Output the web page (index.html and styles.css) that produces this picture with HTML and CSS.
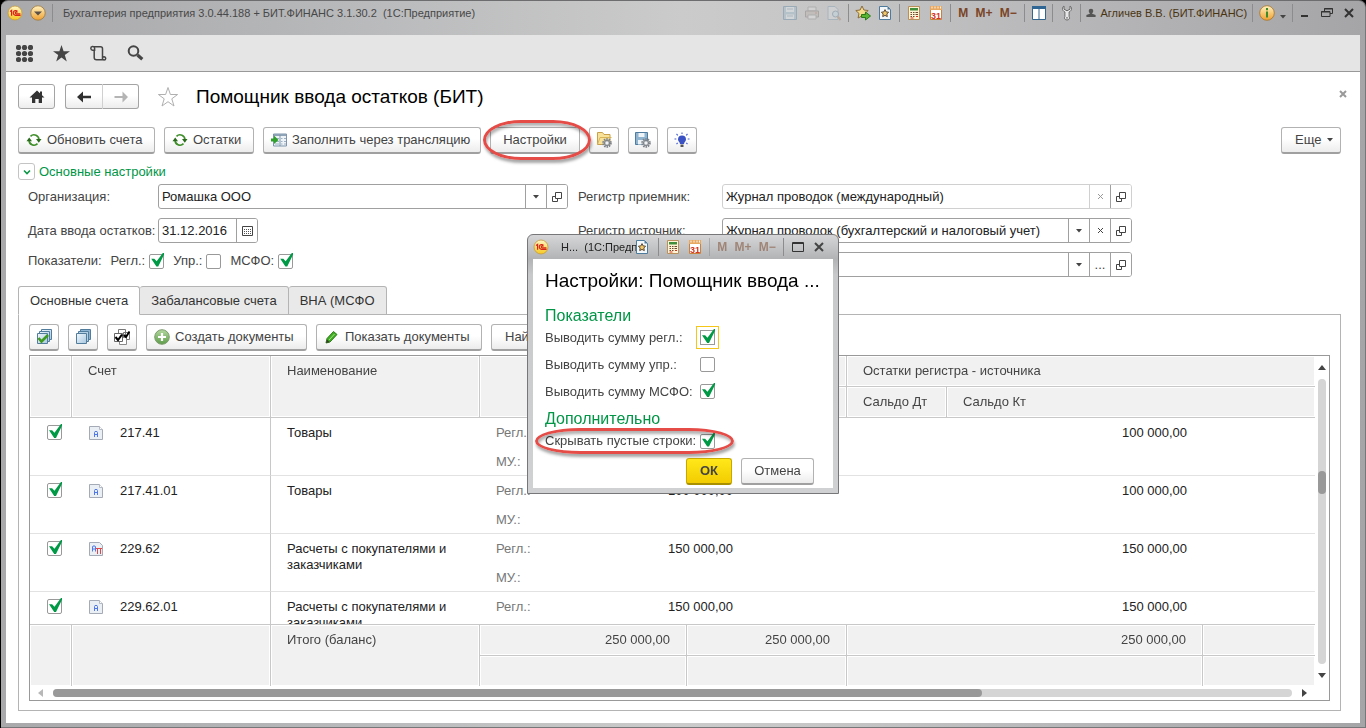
FILE: index.html
```html
<!DOCTYPE html>
<html lang="ru">
<head>
<meta charset="utf-8">
<title>Помощник ввода остатков (БИТ)</title>
<link rel="stylesheet" href="styles.css">
</head>
<body>
<svg class="sprite" aria-hidden="true">
  <defs>
    <linearGradient id="gGold" x1="0" y1="0" x2="0" y2="1"><stop offset="0" stop-color="#fff2c0"/><stop offset="1" stop-color="#f0a030"/></linearGradient>
    <linearGradient id="gYellow" x1="0" y1="0" x2="0" y2="1"><stop offset="0" stop-color="#fff6c8"/><stop offset="1" stop-color="#f6c81e"/></linearGradient>
    <linearGradient id="gGreen" x1="0" y1="0" x2="0" y2="1"><stop offset="0" stop-color="#b4d8a0"/><stop offset="1" stop-color="#5c9c48"/></linearGradient>
    <linearGradient id="gBlue" x1="0" y1="0" x2="1" y2="1"><stop offset="0" stop-color="#f2f8fc"/><stop offset="1" stop-color="#a8c8e0"/></linearGradient>
  </defs>
  <symbol id="logo" viewBox="0 0 16 16"><circle cx="8" cy="8" r="7" fill="url(#gYellow)" stroke="#c79a3a" stroke-width=".8"/><path d="M3 6.600l1.600-1.200v5.400M10.500 6.400A2.400 2.400 0 1 0 9 10.300h4.600M10.200 7.600a1 1 0 1 0-.8 1.200h4" fill="none" stroke="#d8231c" stroke-width="1.200"/></symbol>
  <symbol id="drop" viewBox="0 0 16 16"><circle cx="8" cy="8" r="7.200" fill="url(#gGold)" stroke="#a07838" stroke-width=".8"/><path d="M4 6.400h8L8 10.600z" fill="#5a5048"/></symbol>
  <symbol id="floppy" viewBox="0 0 16 16"><path d="M1.500 1.500h13v13h-13z" fill="#a5bccb" stroke="#6f8fa6"/><path d="M4 2h8v5H4zM4 9.500h8V14H4z" fill="#dfe6ea"/><path d="M5 4h6M5 11h6" stroke="#93a9b8"/></symbol>
  <symbol id="printer" viewBox="0 0 16 16"><path d="M4 2h8v4H4z" fill="#dcdcdc" stroke="#999"/><path d="M1.500 6h13v6h-13z" fill="#bdb5b0" stroke="#8b8581"/><path d="M4 10h8v4H4z" fill="#e2e2e2" stroke="#999"/><path d="M11 8h2" stroke="#c07860"/></symbol>
  <symbol id="preview" viewBox="0 0 16 16"><path d="M2 1.500h7l3 3v10H2z" fill="#d6dadd" stroke="#8da4b4"/><circle cx="9.500" cy="9" r="3" fill="#c4d8e4" stroke="#7a92a4"/><path d="M11.600 11.500L14.500 15" stroke="#b09078" stroke-width="2"/></symbol>
  <symbol id="favadd" viewBox="0 0 16 16"><path d="M7 1l1.900 4 4.300.5-3.200 3 .9 4.400L7 10.800 3.100 13 4 8.500.8 5.500 5.100 5z" fill="#f5dc8c" stroke="#8a6a3a"/><path d="M6.500 9.500h4V7l5 4-5 4v-2.500h-4z" fill="#58b432" stroke="#2a7a18"/></symbol>
  <symbol id="favs" viewBox="0 0 16 16"><path d="M2.500 1.500h8l3 3v10h-11z" fill="#f4f8fb" stroke="#4e7a9c"/><path d="M10.500 1.500v3h3z" fill="#4e7a9c"/><path d="M8 4.600l1.100 2.300 2.500.3-1.800 1.800.5 2.600L8 10.400l-2.300 1.200.5-2.600-1.800-1.800 2.500-.3z" fill="#f0c868" stroke="#5c4630"/></symbol>
  <symbol id="calc" viewBox="0 0 16 16"><path d="M2.500 1.500h11v13h-11z" fill="#fff3d4" stroke="#b98f5c"/><path d="M4 3h8v2.500H4z" fill="#3f8f3c"/><path d="M4.500 7.500h1.500m1 0h1.500m1 0H12M4.500 9.500h1.500m1 0h1.500m1 0H12M4.500 11.500h1.500m1 0h1.500" stroke="#6a4a30"/><path d="M10 11.500h2M4.500 13h3" stroke="#d83020"/></symbol>
  <symbol id="cal" viewBox="0 0 16 16"><path d="M2.500 3h11v11.500h-11z" fill="#fff" stroke="#c8823c"/><path d="M2 1h12v4H2z" fill="#e8a860"/><path d="M4 1.500v2m3-2v2m3-2v2m2.500-2v2" stroke="#fff" stroke-width=".9"/><text x="8" y="13.500" text-anchor="middle" class="cal-day">31</text></symbol>
  <symbol id="panes" viewBox="0 0 16 16"><path d="M1.500 1.500h13v13h-13z" fill="#fff" stroke="#33668f"/><path d="M1 1h14v3H1z" fill="#2f6693"/><path d="M8 4v10" stroke="#33668f"/></symbol>
  <symbol id="wrench" viewBox="0 0 16 16"><path d="M5 1v3.200l3 1.600 3-1.600V1c2 1.200 2.400 4.300-.9 6v4.500c1 1.500.2 3.500-2.100 3.500s-3.100-2-2.100-3.500V7C2.600 5.300 3 2.200 5 1z" fill="#e8e8e8" stroke="#686868"/><circle cx="8" cy="12.800" r=".9" fill="#777"/></symbol>
  <symbol id="user" viewBox="0 0 10 10"><circle cx="5" cy="3" r="2.300" fill="#555"/><path d="M3.800 4h2.400v1.800L9.600 7v2H.4V7l3.400-1.200z" fill="#555"/></symbol>
  <symbol id="info" viewBox="0 0 16 16"><circle cx="8" cy="8" r="7.300" fill="url(#gGold)" stroke="#a87428" stroke-width=".8"/><path d="M8 3v2.200M8 6.400v6" stroke="#3c8a2a" stroke-width="2"/></symbol>
  <symbol id="apps" viewBox="0 0 17 17"><g fill="#454545"><circle cx="2.500" cy="2.500" r="2.600"/><circle cx="8.500" cy="2.500" r="2.600"/><circle cx="14.500" cy="2.500" r="2.600"/><circle cx="2.500" cy="8.500" r="2.600"/><circle cx="8.500" cy="8.500" r="2.600"/><circle cx="14.500" cy="8.500" r="2.600"/><circle cx="2.500" cy="14.500" r="2.600"/><circle cx="8.500" cy="14.500" r="2.600"/><circle cx="14.500" cy="14.500" r="2.600"/></g></symbol>
  <symbol id="star" viewBox="0 0 17 17"><path d="M8.500 0l2.100 6.200H17l-5.200 3.900 2 6.400-5.300-3.900-5.300 3.900 2-6.400L0 6.200h6.400z" fill="#454545"/></symbol>
  <symbol id="scroll" viewBox="0 0 17 17"><path d="M4.200 5V12.500a2.300 2.300 0 0 0 2.300 2.300h7.500M2.800 5.200A1.900 1.900 0 1 1 4.600 3v2.200zM4 1.700h6.500a2 2 0 0 1 2 2v8.600M12.500 12.200v2.600M14.200 11.800a1.600 1.600 0 1 1-1.700 1.600v-1.300z" fill="none" stroke="#454545" stroke-width="1.500"/></symbol>
  <symbol id="lens" viewBox="0 0 17 17"><circle cx="6.500" cy="6" r="4.800" fill="none" stroke="#454545" stroke-width="2"/><path d="M10.500 10l4.800 4.300" stroke="#454545" stroke-width="3.200"/></symbol>
  <symbol id="home" viewBox="0 0 16 16"><path d="M8 1.500l7.500 7H13V14H9.700v-4H6.300v4H3V8.500H.5z" fill="#333"/><path d="M11 2.500h2v4h-2z" fill="#333"/></symbol>
  <symbol id="left" viewBox="0 0 16 16"><path d="M1 8l6-5.500v4.300h8v2.400H7v4.300z" fill="#2f2f2f"/></symbol>
  <symbol id="right" viewBox="0 0 16 16"><path d="M15 8L9.500 2.500V7H1.500v2h8v4.500z" fill="#b4b4b4"/></symbol>
  <symbol id="outline-star" viewBox="0 0 22 22"><path d="M11 1.500l2.400 7h7.200l-5.800 4.300 2.200 7.200-6-4.300L5 20l2.200-7.200L1.400 8.500h7.200z" fill="#fff" stroke="#b0b0b0"/></symbol>
  <symbol id="refresh" viewBox="0 0 16 16"><path d="M4.500 4.300A4.900 4.900 0 0 1 12.900 8M11.500 11.700A4.900 4.900 0 0 1 3.100 8" fill="none" stroke="#3f8f2a" stroke-width="1.700"/><path d="M.5 9.300L3.200 5.500 6 9.300zM10 6.900h5.500l-2.700 3.800z" fill="#2a6a1c"/></symbol>
  <symbol id="fill" viewBox="0 0 16 16"><path d="M2.500 2h13v12h-13z" fill="#eef3f8" stroke="#7d94ab"/><path d="M3 3h12" stroke="#8ea3b8" stroke-width="2"/><path d="M9 3v11" stroke="#7d94ab"/><path d="M4 6.500h4m2 0h1.500m1.500 0h2M4 9.500h4m2 0h1.500m1.500 0h2M4 12h4m2 0h1.500m1.500 0h2" stroke="#9db0c4"/><path d="M0 6.500h3V3.500L7.500 8 3 12V9.500H0z" fill="#2fa02a"/></symbol>
  <symbol id="gear" viewBox="0 0 10 10"><circle cx="5" cy="5" r="3.700" fill="none" stroke="#7c8288" stroke-width="2.200" stroke-dasharray="1.500 .82"/><circle cx="5" cy="5" r="2.600" fill="#c8ccd0" stroke="#7c8288"/><circle cx="5" cy="5" r="1" fill="#fff"/></symbol>
  <symbol id="folder-gear" viewBox="0 0 16 16"><path d="M1.500 12.500V.500h5l1.500 2h6v10z" fill="#f8e29a" stroke="#c8a04c"/><path d="M1.500 12.500L4 5.500h11.500" fill="none" stroke="#d8b458"/><use href="#gear" x="6" y="6" width="10" height="10"/></symbol>
  <symbol id="save-gear" viewBox="0 0 16 16"><path d="M.5.500h12v12H.5z" fill="#8fb4cf" stroke="#4f7c9e"/><path d="M3.500 1h6v4h-6zM3 8h7v4.500H3z" fill="#eef4f8"/><use href="#gear" x="6" y="6" width="10" height="10"/></symbol>
  <symbol id="bulb" viewBox="0 0 16 16"><path d="M8 3.500a4 4 0 0 1 4 4c0 2-2 2.500-2 4.500H6c0-2-2-2.500-2-4.500a4 4 0 0 1 4-4z" fill="#3a52c4"/><path d="M6.500 12.500h3v2.500h-3z" fill="#555"/><path d="M8 .5v1.500M2.500 2l1.300 1.300M13.500 2l-1.300 1.300M.5 7h1.800M15.500 7h-1.800M2.500 12l1.200-1.200M13.500 12l-1.200-1.200" stroke="#4a62cc" stroke-width="1.100"/></symbol>
  <symbol id="check-all" viewBox="0 0 16 16"><path d="M5.500.500h10v10h-10z" fill="url(#gBlue)" stroke="#527c9c"/><path d="M3.500 2.500h10v10h-10z" fill="url(#gBlue)" stroke="#527c9c"/><path d="M1.500 4.500h10v10h-10z" fill="url(#gBlue)" stroke="#527c9c"/><path d="M2.500 9l3 3.500L12 6" fill="none" stroke="#3f9a20" stroke-width="2.600"/></symbol>
  <symbol id="check-none" viewBox="0 0 16 16"><path d="M5.500.500h10v10h-10z" fill="#8db4d2" stroke="#527c9c"/><path d="M3.500 2.500h10v10h-10z" fill="#b4d0e4" stroke="#527c9c"/><path d="M1.500 4.500h10v10h-10z" fill="url(#gBlue)" stroke="#527c9c"/></symbol>
  <symbol id="check-inv" viewBox="0 0 16 16"><path d="M4.500.500h7v7h-7zM9.500 3.500h6v7h-6z" fill="#fff" stroke="#777"/><path d="M5.500 8.500h7v7h-7z" fill="#fff" stroke="#888"/><path d="M.5 4.500h8v8h-8z" fill="#fff" stroke="#666"/><path d="M1.500 8l2.500 3 4-5.500M10 6l2 2L15.500 2.500" fill="none" stroke="#000" stroke-width="2"/></symbol>
  <symbol id="plus" viewBox="0 0 16 16"><circle cx="8" cy="8" r="7.300" fill="url(#gGreen)" stroke="#7c9c6c"/><path d="M8 4v8M4 8h8" stroke="#fff" stroke-width="2.200"/></symbol>
  <symbol id="pencil" viewBox="0 0 16 16"><path d="M2 14l1-4.500L9.500 2.500l3.500 3L6 13z" fill="#3fae22" stroke="#2c7c18"/><path d="M5 11l5.500-6" stroke="#a4e088"/><path d="M2 14l1-3.500L5.500 13z" fill="#3c3c2c"/></symbol>
  <symbol id="caret" viewBox="0 0 6 4"><path d="M0 0h6L3 3.500z" fill="#444"/></symbol>
  <symbol id="open" viewBox="0 0 10 10"><path d="M3.500.500h6v6h-6zM3 4.500H.5v5h5V7" fill="none" stroke="#444"/></symbol>
  <symbol id="cross" viewBox="0 0 7 7"><path d="M1 1l5 5M6 1L1 6" stroke="currentColor" fill="none"/></symbol>
  <symbol id="month" viewBox="0 0 11 10"><path d="M.5.500h10v9H.5z" fill="none" stroke="#444"/><path d="M2 3.500h7M2 5.500h7M2 7.500h7" stroke="#555" stroke-dasharray="1 1"/></symbol>
  <symbol id="acc" viewBox="0 0 14 14"><path d="M.5.500h10l3 3v10H.5z" fill="#eaeff6" stroke="#a4abb6"/><path d="M10.500.500v3h3" fill="#fff" stroke="#b4bbc4"/><path d="M5.500 11V6.500L6 5.500h2l.5 1V11M5.500 8.500h3" fill="none" stroke="#5078e8"/></symbol>
  <symbol id="acc2" viewBox="0 0 14 14"><path d="M.5.500h10l3 3v10H.5z" fill="#eaeff6" stroke="#a4abb6"/><path d="M3.500 9.500V5L4 4h2l.5 1v4.500M3.500 7h3" fill="none" stroke="#5078e8"/><path d="M7 6.500h6M8.500 6.500V12M11.500 6.500V12" fill="none" stroke="#e04848"/></symbol>
</svg>

<div class="window">
  <header class="titlebar">
    <svg class="i16"><use href="#logo"/></svg>
    <button class="tb main-menu" aria-label="Главное меню"><svg class="i16"><use href="#drop"/></svg></button>
    <span class="app-title">Бухгалтерия предприятия 3.0.44.188 + БИТ.ФИНАНС 3.1.30.2&nbsp; (1С:Предприятие)</span>
    <div class="tgroup g-file faded"><button class="tb" aria-label="Сохранить"><svg class="i16"><use href="#floppy"/></svg></button><button class="tb" aria-label="Печать"><svg class="i16"><use href="#printer"/></svg></button><button class="tb" aria-label="Просмотр"><svg class="i16"><use href="#preview"/></svg></button></div>
    <div class="tgroup g-two"><button class="tb" aria-label="В избранное"><svg class="i16"><use href="#favadd"/></svg></button><button class="tb" aria-label="Избранное"><svg class="i16"><use href="#favs"/></svg></button></div>
    <div class="tgroup g-two"><button class="tb" aria-label="Калькулятор"><svg class="i16"><use href="#calc"/></svg></button><button class="tb" aria-label="Календарь"><svg class="i16"><use href="#cal"/></svg></button></div>
    <div class="tgroup g-mem"><button class="tb mem">M</button><button class="tb mem">M+</button><button class="tb mem">M−</button></div>
    <div class="tgroup g-one"><button class="tb" aria-label="Панели"><svg class="i16"><use href="#panes"/></svg></button></div>
    <div class="tgroup g-one"><button class="tb" aria-label="Сервис"><svg class="i16"><use href="#wrench"/></svg></button></div>
    <div class="tgroup g-user"><svg class="i10"><use href="#user"/></svg><span>Агличев В.В. (БИТ.ФИНАНС)</span></div>
    <div class="tgroup g-info"><button class="tb" aria-label="Справка"><svg class="i16"><use href="#info"/></svg></button><svg class="caret low"><use href="#caret"/></svg></div>
    <div class="tgroup g-win"><button class="tb" aria-label="Свернуть"><svg class="i12" viewBox="0 0 12 12"><path d="M3 9h7" stroke="#333" stroke-width="2"/></svg></button><button class="tb" aria-label="Восстановить"><svg class="i12" viewBox="0 0 12 12"><path d="M3.500 4V1.500h8v5H9M.5 4.500h8.500v5H.5z" fill="none" stroke="#333"/><path d="M3 2h9M0 5h9" stroke="#333"/></svg></button><button class="tb" aria-label="Закрыть"><svg class="i12" viewBox="0 0 12 12"><path d="M2 2l8 8M10 2l-8 8" stroke="#333" stroke-width="2"/></svg></button></div>
  </header>

  <nav class="sections">
    <button class="tb" aria-label="Меню функций"><svg class="i17"><use href="#apps"/></svg></button>
    <button class="tb" aria-label="Избранное"><svg class="i17"><use href="#star"/></svg></button>
    <button class="tb" aria-label="История"><svg class="i17"><use href="#scroll"/></svg></button>
    <button class="tb" aria-label="Поиск"><svg class="i17"><use href="#lens"/></svg></button>
  </nav>

  <main class="page">
    <div class="head">
      <button class="btn nav-btn" aria-label="Домой"><svg class="i16"><use href="#home"/></svg></button>
      <div class="nav-pair"><button class="btn nav-btn" aria-label="Назад"><svg class="i16"><use href="#left"/></svg></button><button class="btn nav-btn" aria-label="Вперед"><svg class="i16"><use href="#right"/></svg></button></div>
      <button class="tb" aria-label="Добавить в избранное"><svg class="i22"><use href="#outline-star"/></svg></button>
      <h1>Помощник ввода остатков (БИТ)</h1>
      <button class="tb page-close" aria-label="Закрыть страницу"><svg class="i12" viewBox="0 0 12 12"><path d="M3 3l6 6M9 3l-6 6" stroke="#999" stroke-width="2"/></svg></button>
    </div>

    <div class="bar">
      <button class="btn w-update"><svg class="i16"><use href="#refresh"/></svg>Обновить счета</button>
      <button class="btn w-short"><svg class="i16"><use href="#refresh"/></svg>Остатки</button>
      <button class="btn w-fill"><svg class="i16"><use href="#fill"/></svg>Заполнить через трансляцию</button>
      <div class="marked"><button class="btn w-short center">Настройки</button><span class="ring ring-button"></span></div>
      <button class="btn square" aria-label="Загрузить настройки"><svg class="i16"><use href="#folder-gear"/></svg></button>
      <button class="btn square" aria-label="Сохранить настройки"><svg class="i16"><use href="#save-gear"/></svg></button>
      <button class="btn square" aria-label="Подсказка"><svg class="i16"><use href="#bulb"/></svg></button>
      <button class="btn more">Еще<svg class="caret"><use href="#caret"/></svg></button>
    </div>

    <div class="group-head"><button class="fold" aria-label="Свернуть группу"><svg class="i8" viewBox="0 0 8 8"><path d="M1 2.500l3 3 3-3" fill="none" stroke="#0a9646" stroke-width="1.600"/></svg></button><span>Основные настройки</span></div>

    <div class="fields">
      <div class="fcol">
        <div class="frow"><label for="org">Организация:</label><div class="field"><input id="org" type="text" value="Ромашка ООО"><button aria-label="Выбрать"><svg class="caret"><use href="#caret"/></svg></button><button aria-label="Открыть"><svg class="i10"><use href="#open"/></svg></button></div></div>
        <div class="frow"><label for="date">Дата ввода остатков:</label><div class="field date"><input id="date" type="text" value="31.12.2016"><button aria-label="Календарь"><svg class="i11"><use href="#month"/></svg></button></div></div>
        <div class="frow flags"><span>Показатели:</span><label>Регл.:<input class="chk" type="checkbox" checked></label><label>Упр.:<input class="chk" type="checkbox"></label><label>МСФО:<input class="chk" type="checkbox" checked></label></div>
      </div>
      <div class="fcol">
        <div class="frow wide"><label for="dst">Регистр приемник:</label><div class="field dim"><input id="dst" type="text" value="Журнал проводок (международный)"><button class="grey" aria-label="Очистить"><svg class="i7"><use href="#cross"/></svg></button><button class="strong" aria-label="Открыть"><svg class="i10"><use href="#open"/></svg></button></div></div>
        <div class="frow wide"><label for="src">Регистр источник:</label><div class="field"><input id="src" type="text" value="Журнал проводок (бухгалтерский и налоговый учет)"><button aria-label="Выбрать"><svg class="caret"><use href="#caret"/></svg></button><button aria-label="Очистить"><svg class="i7"><use href="#cross"/></svg></button><button aria-label="Открыть"><svg class="i10"><use href="#open"/></svg></button></div></div>
        <div class="frow wide"><span></span><div class="field"><input type="text" aria-label="Правило"><button aria-label="Выбрать"><svg class="caret"><use href="#caret"/></svg></button><button aria-label="Другое">...</button><button aria-label="Открыть"><svg class="i10"><use href="#open"/></svg></button></div></div>
      </div>
    </div>

    <div class="tabs" role="tablist"><button class="tab active" role="tab">Основные счета</button><button class="tab" role="tab">Забалансовые счета</button><button class="tab" role="tab">ВНА (МСФО</button><span class="tab-rest"></span></div>

    <section class="panel">
      <div class="bar">
        <button class="btn square" aria-label="Отметить все"><svg class="i16"><use href="#check-all"/></svg></button>
        <button class="btn square" aria-label="Снять отметки"><svg class="i16"><use href="#check-none"/></svg></button>
        <button class="btn square" aria-label="Инвертировать"><svg class="i16"><use href="#check-inv"/></svg></button>
        <button class="btn w-create"><svg class="i16"><use href="#plus"/></svg>Создать документы</button>
        <button class="btn w-show"><svg class="i16"><use href="#pencil"/></svg>Показать документы</button>
        <button class="btn find">Най...</button>
      </div>

      <div class="grid-box">
        <div class="scroller">
          <table>
            <colgroup><col class="c1"><col class="c2"><col class="c3"><col class="c4"><col class="c5"><col class="c6"><col class="c7"><col></colgroup>
            <thead>
              <tr><th rowspan="2"></th><th rowspan="2">Счет</th><th rowspan="2">Наименование</th><th rowspan="2"></th><th></th><th colspan="3" class="last">Остатки регистра - источника</th></tr>
              <tr><th></th><th>Сальдо Дт</th><th colspan="2" class="last">Сальдо Кт</th></tr>
            </thead>
            <tbody>
              <tr><td class="mark"><input class="chk" type="checkbox" checked aria-label="217.41"></td><td class="edge"><span class="code"><svg class="i14"><use href="#acc"/></svg>217.41</span></td><td class="name">Товары</td><td colspan="2"><div class="sum"><span>Регл.:</span><b></b></div><div class="sum"><span>МУ.:</span></div></td><td colspan="2" class="num">100 000,00</td><td></td></tr>
              <tr><td class="mark"><input class="chk" type="checkbox" checked aria-label="217.41.01"></td><td class="edge"><span class="code"><svg class="i14"><use href="#acc"/></svg>217.41.01</span></td><td class="name">Товары</td><td colspan="2"><div class="sum"><span>Регл.:</span><b>100 000,00</b></div><div class="sum"><span>МУ.:</span></div></td><td colspan="2" class="num">100 000,00</td><td></td></tr>
              <tr><td class="mark"><input class="chk" type="checkbox" checked aria-label="229.62"></td><td class="edge"><span class="code"><svg class="i14"><use href="#acc2"/></svg>229.62</span></td><td class="name">Расчеты с покупателями и заказчиками</td><td colspan="2"><div class="sum"><span>Регл.:</span><b>150 000,00</b></div><div class="sum"><span>МУ.:</span></div></td><td colspan="2" class="num">150 000,00</td><td></td></tr>
              <tr><td class="mark"><input class="chk" type="checkbox" checked aria-label="229.62.01"></td><td class="edge"><span class="code"><svg class="i14"><use href="#acc"/></svg>229.62.01</span></td><td class="name">Расчеты с покупателями и заказчиками</td><td colspan="2"><div class="sum"><span>Регл.:</span><b>150 000,00</b></div><div class="sum"><span>МУ.:</span></div></td><td colspan="2" class="num">150 000,00</td><td></td></tr>
            </tbody>
            <tfoot>
              <tr><td rowspan="2"></td><td rowspan="2"></td><td rowspan="2" class="total">Итого (баланс)</td><td class="num">250 000,00</td><td class="num">250 000,00</td><td colspan="2" class="num">250 000,00</td><td class="last"></td></tr>
              <tr><td></td><td></td><td colspan="2"></td><td class="last"></td></tr>
            </tfoot>
          </table>
        </div>
        <div class="vscroll"><i class="arrow up"></i><div class="track"><div class="thumb"></div></div><i class="arrow down"></i></div>
        <div class="hscroll"><i class="arrow prev"></i><div class="track"><div class="thumb"></div></div><i class="arrow next"></i></div>
      </div>
    </section>
  </main>
</div>

<div class="dialog" role="dialog" aria-labelledby="dlg-title">
  <div class="dlg-bar">
    <svg class="i16"><use href="#logo"/></svg>
    <span class="dlg-caption">Н...&nbsp; (1С:Предп.</span>
    <button class="tb" aria-label="Избранное"><svg class="i16"><use href="#favs"/></svg></button>
    <div class="tgroup g-two"><button class="tb" aria-label="Калькулятор"><svg class="i16"><use href="#calc"/></svg></button><button class="tb" aria-label="Календарь"><svg class="i16"><use href="#cal"/></svg></button></div>
    <div class="tgroup g-mem faded"><button class="tb mem">M</button><button class="tb mem">M+</button><button class="tb mem">M−</button></div>
    <div class="tgroup g-dlg"><button class="tb" aria-label="Развернуть"><svg class="i12" viewBox="0 0 12 12"><path d="M.5 1.500h11v9H.5zM0 2.500h12" fill="none" stroke="#333"/></svg></button><button class="tb" aria-label="Закрыть"><svg class="i12" viewBox="0 0 12 12"><path d="M2 2l8 8M10 2l-8 8" stroke="#444" stroke-width="2"/></svg></button></div>
  </div>
  <div class="dlg-body">
    <h2 id="dlg-title">Настройки: Помощник ввода ...</h2>
    <h3>Показатели</h3>
    <label class="opt"><span>Выводить сумму регл.:</span><input class="chk focus" type="checkbox" checked></label>
    <label class="opt"><span>Выводить сумму упр.:</span><input class="chk" type="checkbox"></label>
    <label class="opt"><span>Выводить сумму МСФО:</span><input class="chk" type="checkbox" checked></label>
    <h3>Дополнительно</h3>
    <label class="opt tight"><span>Скрывать пустые строки:</span><input class="chk" type="checkbox" checked><i class="ring ring-option"></i></label>
    <div class="dlg-actions"><button class="btn ok">ОК</button><button class="btn center cancel">Отмена</button></div>
  </div>
</div>
</body>
</html>
```
FILE: styles.css
```css
* { box-sizing: border-box; }
body { margin: 0; font: 13px/16px "Liberation Sans", Arial, sans-serif; color: #333; background: #000; overflow: hidden; }
button, input { font: inherit; color: inherit; margin: 0; }
button { padding: 0; }
h1, h2, h3 { margin: 0; font-weight: normal; }
svg { display: block; flex: none; }
.sprite { position: absolute; width: 0; height: 0; }
.i7 { width: 7px; height: 7px; }
.i8 { width: 8px; height: 8px; }
.i10 { width: 10px; height: 10px; }
.i11 { width: 11px; height: 10px; }
.i12 { width: 12px; height: 12px; }
.i14 { width: 14px; height: 14px; }
.i16 { width: 16px; height: 16px; }
.i17 { width: 17px; height: 17px; }
.i22 { width: 22px; height: 22px; }
.caret { width: 6px; height: 4px; }
.cal-day { font: bold 9px "Liberation Sans", Arial, sans-serif; fill: #d8341c; }

.window {
  height: 100vh; display: flex; flex-direction: column;
  margin-left: 1px; padding: 0 5px 4px; border-top: 1px solid #6d6d70; border-bottom: 1px solid #77777a; border-right: 1px solid #77777a;
  border-radius: 7px 7px 0 0;
  background: linear-gradient(90deg, #a9a9ac 0, #b4b5b7 20%, #cbcbcb 50%, #c6c6c7 60%, #a5a5a8 100%);
}
.titlebar { height: 34px; flex: none; display: flex; align-items: flex-start; padding: 3px 0 0 1px; }
.titlebar > svg { margin-top: 1px; }
.tb { border: 0; background: none; display: flex; align-items: center; justify-content: center; }
.main-menu { margin: 1px 6px 0 7px; }
.app-title { flex: 1; min-width: 0; border-left: 1px solid #8c8c8f; padding-left: 10px; font-size: 11px; line-height: 18px; color: #484848; white-space: nowrap; overflow: hidden; }
.tgroup { display: flex; align-items: center; justify-content: space-evenly; height: 18px; border-left: 1px solid #8c8c8f; }
.g-file { width: 72px; border-left: 0; }
.g-two { width: 51px; }
.g-mem { width: 74px; }
.g-one { width: 28px; }
.g-user { width: 172px; font-size: 11px; color: #4a3410; white-space: nowrap; overflow: hidden; }
.g-info { width: 40px; }
.g-win { width: 68px; justify-content: space-between; padding: 0 5px; }
.faded { opacity: .5; }
.mem { font: bold 12px/16px "Liberation Sans", Arial, sans-serif; color: #7a4426; }
.low { margin-top: 8px; }

.sections { height: 37px; flex: none; display: flex; align-items: center; gap: 20px; padding-left: 10px; background: #e5e5e5; border-bottom: 1px solid #999; }
.page { flex: 1; min-height: 0; display: flex; flex-direction: column; background: #fff; padding: 12px 19px 12px 12px; }

.btn { position: relative; height: 27px; display: flex; align-items: center; gap: 5px; padding: 0 7px; border: 1px solid #b2b2b2; border-bottom: 2px solid #a0a0a0; border-radius: 3px; background: linear-gradient(#fff 45%, #ececec); color: #444; white-space: nowrap; }
.center { justify-content: center; }
.square { width: 30px; justify-content: center; padding: 0; }
.w-update { width: 137px; }
.w-short { width: 90px; }
.w-fill { width: 218px; }
.w-create { width: 161px; }
.w-show { width: 166px; }
.find { width: 90px; padding-left: 13px; }
.more { width: 60px; margin-left: auto; padding-left: 13px; gap: 6px; }

.head { display: flex; align-items: center; height: 25px; }
.head h1 { margin-left: 17px; font-size: 19px; line-height: 24px; color: #000; }
.nav-btn { width: 37px; height: 25px; justify-content: center; border-bottom-width: 1px; border-color: #a4a4a4; }
.nav-pair { display: flex; margin: 0 18px 0 10px; }
.nav-pair .btn:first-child { border-radius: 3px 0 0 3px; border-right: 0; }
.nav-pair .btn:last-child { border-radius: 0 3px 3px 0; border-left-color: #d0d0d0; }
.page-close { margin: -6px -8px 0 auto; }

.bar { display: flex; gap: 9px; flex: none; }
.page > .bar { margin-top: 18px; }
.marked { position: relative; }
.ring { position: absolute; border: 3px solid #e54c47; box-shadow: 1px 3px 3px rgba(0,0,0,.35), inset 1px 3px 3px rgba(0,0,0,.3); pointer-events: none; }
.ring-button { inset: -7px -11px -6px -7px; border-radius: 38px / 20px; z-index: 1; }
.ring-option { inset: -4px -19px -4px -10px; border-radius: 45px / 13px; }

.group-head { display: flex; align-items: center; gap: 4px; margin-top: 9px; color: #009646; height: 17px; }
.fold { width: 17px; height: 17px; border: 1px solid #c4c4c4; border-radius: 3px; background: #fff; display: flex; align-items: center; justify-content: center; }

.fields { display: flex; gap: 10px; margin: 4px 0 9px; padding-left: 10px; }
.fcol { display: flex; flex-direction: column; gap: 9px; }
.frow { display: grid; grid-template-columns: 130px minmax(0, 410px); align-items: center; height: 25px; color: #444; white-space: nowrap; }
.wide { grid-template-columns: 144px minmax(0, 410px); }
.field { display: flex; height: 25px; border: 1px solid #a0a0a0; border-radius: 3px; background: #fff; overflow: hidden; }
.field input { flex: 1; min-width: 0; border: 0; padding: 0 3px; outline: 0; background: none; color: #222; }
.field button { width: 21px; flex: none; border: 0; border-left: 1px solid #a0a0a0; background: #fff; display: flex; align-items: center; justify-content: center; }
.date { width: 100px; }
.dim { border-color: #d0d0d0; }
.field .grey { border-left-color: #d0d0d0; color: #999; }
.field .strong { border-left-color: #a0a0a0; }
.frow.flags { display: flex; gap: 9px; height: 18px; }
.flags label { display: flex; align-items: center; gap: 4px; }

.chk { appearance: none; position: relative; width: 15px; height: 15px; flex: none; border: 1px solid #999; border-radius: 2px; background: #fff; }
.chk:checked::before { content: ""; position: absolute; left: 1px; top: -2px; width: 13px; height: 14px; background: #009a46; clip-path: polygon(0 44%, 24% 44%, 42% 62%, 92% 0, 100% 0, 100% 12%, 54% 100%, 40% 100%); }
.focus { border-radius: 0; outline: 1px solid #f5c518; outline-offset: 3px; }

.tabs { display: flex; height: 29px; flex: none; }
.tab { padding: 0 11px; border: 1px solid #b4b4b4; border-left: 0; background: #e9e9e9; border-radius: 3px 3px 0 0; color: #333; white-space: nowrap; }
.tab.active { border-left: 1px solid #b4b4b4; border-bottom-color: #fff; background: #fff; }
.tab-rest { flex: 1; border-bottom: 1px solid #b4b4b4; }
.panel { flex: 1; min-height: 0; display: flex; flex-direction: column; border: 1px solid #b4b4b4; border-top: 0; padding: 9px 10px; }

.grid-box { flex: 1; min-height: 0; margin-top: 4px; border: 1px solid #999; display: grid; grid-template: minmax(0, 1fr) 14px / minmax(0, 1fr) 14px; }
.scroller { overflow: hidden; }
table { width: 100%; table-layout: fixed; border-collapse: separate; border-spacing: 0; }
.c1 { width: 42px; } .c2 { width: 199px; } .c3 { width: 209px; } .c4 { width: 207px; } .c5 { width: 160px; } .c6 { width: 100px; } .c7 { width: 256px; }
th, td { padding: 0 16px; text-align: left; vertical-align: top; font-weight: normal; line-height: 29px; }
thead { position: sticky; top: 0; z-index: 2; }
tfoot { position: sticky; bottom: 0; z-index: 2; }
th { height: 31px; border: solid #c8c8c8; border-width: 0 1px 1px 0; background: #f1f1f1; box-shadow: inset 0 0 0 1px #fff; color: #444; }
tfoot td { height: 31px; border: solid #c8c8c8; border-width: 1px 1px 0 0; background: #f1f1f1; box-shadow: inset 0 0 0 1px #fff; color: #444; }
th.last, tfoot .last { border-right: 0; }
tbody td { height: 58px; border-bottom: 1px solid #e2e2e2; }
tbody .edge { border-right: 1px solid #c8c8c8; }
tbody .name { padding: 7px 17px 0 16px; line-height: 16px; color: #222; }
tbody .mark { padding: 7px 0 0 17px; line-height: 0; }
.code { display: flex; align-items: center; gap: 17px; height: 29px; padding-left: 1px; color: #222; }
.sum { display: flex; justify-content: space-between; height: 28px; line-height: 29px; padding-right: 98px; color: #777; }
.sum:first-child { height: 29px; }
.sum b { font-weight: normal; color: #222; }
.num { text-align: right; }
tbody .num { color: #222; }

.arrow { width: 0; height: 0; border: 4px solid transparent; flex: none; }
.up { border-top: 0; border-bottom: 5px solid #444; }
.down { border-bottom: 0; border-top: 5px solid #444; }
.prev { border-left: 0; border-right: 5px solid #b8b8b8; }
.next { border-right: 0; border-left: 5px solid #444; }
.vscroll { display: flex; flex-direction: column; align-items: center; padding: 9px 0 8px; gap: 9px; }
.vscroll .track { width: 8px; flex: 1; background: #d5d5d5; border-radius: 4px; padding-top: 92px; }
.vscroll .thumb { height: 23px; background: #999; border-radius: 4px; }
.hscroll { display: flex; align-items: center; padding: 0 8px; gap: 10px; }
.hscroll .track { flex: 1; height: 8px; background: #d5d5d5; border-radius: 4px; }
.hscroll .thumb { width: 75%; height: 8px; background: #999; border-radius: 4px; }

.dialog { position: absolute; left: 527px; top: 234px; width: 312px; border: 1px solid #77777a; border-radius: 6px 6px 0 0; padding: 0 5px 5px; background: linear-gradient(#d6d6d8, #b2b3b5 24px, #c8c9ca 40px, #d0d1d2); z-index: 5; }
.dlg-bar { height: 24px; display: flex; align-items: center; }
.dlg-caption { flex: 1; min-width: 0; padding-left: 12px; font-size: 11px; color: #222; white-space: nowrap; }
.dlg-bar .g-two { margin-left: 8px; }
.g-dlg { width: 50px; }
.dlg-body { background: #fff; padding: 9px 19px 3px 12px; }
h2 { font-size: 19px; line-height: 26px; color: #000; white-space: nowrap; }
h3 { font-size: 16px; line-height: 20px; color: #009646; }
h2 + h3 { margin-top: 12px; }
.opt + h3 { margin-top: 4px; }
.opt { display: flex; align-items: center; height: 27px; color: #444; white-space: nowrap; }
.opt span { width: 155px; }
h3 + .opt { margin-top: -2px; }
.tight { position: relative; width: 170px; height: 18px; }
h3 + .tight { margin-top: 3px; }
.dlg-actions { display: flex; justify-content: flex-end; gap: 9px; margin-top: 8px; }
.ok { width: 46px; justify-content: center; background: linear-gradient(#ffe81a, #f2cc00); border-color: #c8a800; border-bottom-color: #a89000; font-weight: bold; }
.cancel { width: 73px; }
```
